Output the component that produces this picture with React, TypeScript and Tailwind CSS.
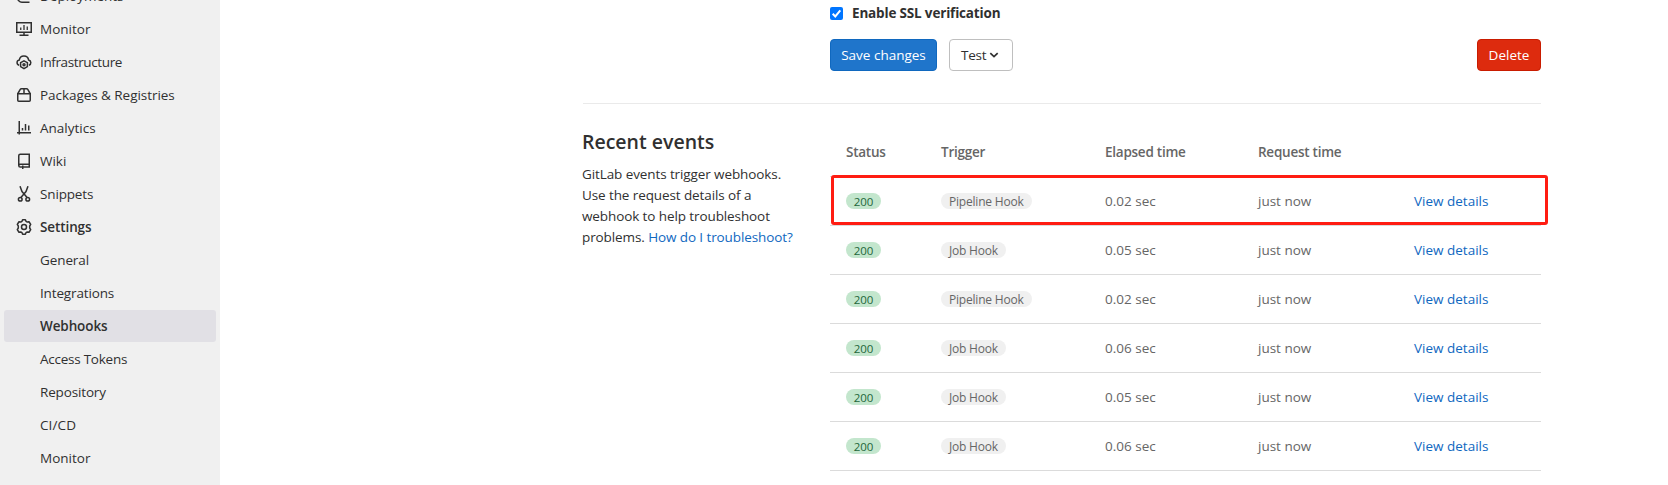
import type { ReactNode } from 'react';

function Icon({ children }: { children: ReactNode }) {
  return (
    <svg
      width="16"
      height="16"
      viewBox="0 0 16 16"
      fill="none"
      stroke="#303030"
      strokeWidth="1.5"
      className="shrink-0"
    >
      {children}
    </svg>
  );
}

const icons = {
  deployments: (
    <Icon>
      <path d="M1.750 5v4.500a4.200 4.200 0 0 0 4.200 4.750H13.500" />
    </Icon>
  ),
  monitor: (
    <Icon>
      <path d="M.75 1.750h14.500v9.500H.75zM8 11.500v3M3.500 14.250h9" />
      <path d="M4.750 9V6.500M8 9V4M11.250 9V5.500" strokeWidth="1.300" />
    </Icon>
  ),
  infrastructure: (
    <Icon>
      <path d="M3.200 11.300A2.700 2.700 0 0 1 3.300 6a4.700 4.700 0 0 1 9.300-.1 2.800 2.800 0 0 1 .3 5.400" />
      <path d="M8 6.800l3.400 1.900v3.900L8 14.650l-3.400-2.050V8.700z" />
      <circle cx="8" cy="10.700" r="1" />
    </Icon>
  ),
  packages: (
    <Icon>
      <path d="M1.750 6.750h12.500v6.500a1 1 0 0 1-1 1H2.750a1 1 0 0 1-1-1zM1.750 6.750l2.500-4.300a1.400 1.400 0 0 1 1.200-.7h5.100a1.400 1.400 0 0 1 1.200.7l2.500 4.300M8 1.750v5" />
    </Icon>
  ),
  analytics: (
    <Icon>
      <path d="M3.250 1v13.500M1 12.750h14M6.500 10.500V8M9.500 10.500V4M12.750 10.500V5.500" />
    </Icon>
  ),
  wiki: (
    <Icon>
      <path d="M13.250 11.500V1.250H4.250a1.500 1.500 0 0 0-1.500 1.500v9.750c0 .9.600 1.600 1.500 1.600h9v-2.850H4.500c-1 0-1.700.5-1.700 1.300M6.750 12.500V16" />
    </Icon>
  ),
  snippets: (
    <Icon>
      <path d="M4 .2l2 5.300 5.300 6.200M12 .2l-2 5.300L4.700 11.700" />
      <circle cx="4.250" cy="13.250" r="1.850" />
      <circle cx="11.750" cy="13.250" r="1.850" />
    </Icon>
  ),
  settings: (
    <Icon>
      <path
        strokeLinejoin="round"
        d="M6.600.75h2.800l.6 1.550 1.300.75 1.700-.3 1.700 2.700L13.700 7v2l1 1.550-1.700 2.700-1.700-.3-1.300.75-.6 1.550H6.600L6 13.700l-1.300-.75-1.700.3-1.700-2.700 1-1.550V7l-1-1.550L3 2.750l1.700.3L6 2.300z"
      />
      <circle cx="8" cy="8" r="2.500" />
    </Icon>
  ),
};

const nav: { icon: ReactNode; label: string; cls: string }[] = [
  { icon: icons.deployments, label: 'Deployments', cls: '' },
  { icon: icons.monitor, label: 'Monitor', cls: '' },
  { icon: icons.infrastructure, label: 'Infrastructure', cls: 'tracking-[-0.38px]' },
  { icon: icons.packages, label: 'Packages & Registries', cls: 'tracking-[-0.05px]' },
  { icon: icons.analytics, label: 'Analytics', cls: '' },
  { icon: icons.wiki, label: 'Wiki', cls: '' },
  { icon: icons.snippets, label: 'Snippets', cls: 'tracking-[-0.15px]' },
  { icon: icons.settings, label: 'Settings', cls: 'font-semibold tracking-[-0.1px]' },
];

const subnav = [
  { label: 'General', cls: 'tracking-[-0.1px]' },
  { label: 'Integrations', cls: 'tracking-[-0.15px]' },
  { label: 'Webhooks', cls: 'bg-[#e1e0e5] font-semibold tracking-[-0.1px]' },
  { label: 'Access Tokens', cls: 'tracking-[-0.25px]' },
  { label: 'Repository', cls: 'tracking-[-0.15px]' },
  { label: 'CI/CD', cls: 'tracking-[0.1px]' },
  { label: 'Monitor', cls: '' },
];

const events = [
  { trigger: 'Pipeline Hook', elapsed: '0.02 sec' },
  { trigger: 'Job Hook', elapsed: '0.05 sec' },
  { trigger: 'Pipeline Hook', elapsed: '0.02 sec' },
  { trigger: 'Job Hook', elapsed: '0.06 sec' },
  { trigger: 'Job Hook', elapsed: '0.05 sec' },
  { trigger: 'Job Hook', elapsed: '0.06 sec' },
];

function Sidebar() {
  return (
    <aside className="flex h-full w-[220px] shrink-0 flex-col justify-start overflow-hidden bg-[#f0f0f0] px-1">
      <nav className="-mt-5 flex flex-col gap-px">
        {nav.map((n) => (
          <a key={n.label} className={`flex h-8 shrink-0 items-center gap-2 pl-3 ${n.cls}`}>
            {n.icon}
            <span>{n.label}</span>
          </a>
        ))}
        {subnav.map((s) => (
          <a key={s.label} className={`flex h-8 shrink-0 items-center rounded-[3px] pl-9 ${s.cls}`}>
            {s.label}
          </a>
        ))}
      </nav>
    </aside>
  );
}

const columns = 'grid grid-cols-[95px_164px_153px_156px_1fr] items-center pl-4';

export default function App() {
  return (
    <div className="flex h-[485px] w-[1668px] overflow-hidden bg-white font-['Open_Sans',sans-serif] text-[13.5px] leading-[21px] text-[#303030]">
      <Sidebar />
      <main className="ml-[363px] w-[958px] shrink-0">
        <div className="flex h-[103px] flex-col pl-[247px]">
          <div className="mt-[3px] flex h-[21px] items-center gap-[9px] font-bold tracking-[-0.17px]">
            <svg width="13" height="13" viewBox="0 0 13 13" className="shrink-0">
              <rect width="13" height="13" rx="2" fill="#0075ff" />
              <path d="M2.700 6.700l2.600 2.700 5-6" fill="none" stroke="#fff" strokeWidth="2" />
            </svg>
            <span>Enable SSL verification</span>
          </div>
          <div className="mt-[15px] flex h-8 items-stretch">
            <button className="w-[107px] rounded-[4px] border border-[#1068bf] bg-[#1f75cb] text-white">
              Save changes
            </button>
            <button className="ml-3 flex w-16 items-center rounded-[4px] border border-[#bfbfbf] pl-[11px] tracking-[-0.2px]">
              Test
              <svg width="10" height="8" viewBox="0 0 10 8" className="ml-[3px]">
                <path d="M1.300 2.200L5 5.700 8.700 2.200" fill="none" stroke="#303030" strokeWidth="1.700" />
              </svg>
            </button>
            <button className="ml-auto w-16 rounded-[4px] border border-[#c91c00] bg-[#dd2b0e] text-white">
              Delete
            </button>
          </div>
        </div>
        <div className="flex border-t border-[#eaeaea]">
          <section className="w-[247px] shrink-0 pt-[26px]">
            <h4 className="-ml-px text-[19.5px] leading-6 font-semibold">Recent events</h4>
            <p className="mt-[10px] -ml-px whitespace-nowrap tracking-[-0.1px]">
              GitLab events trigger webhooks.
              <br />
              Use the request details of a
              <br />
              webhook to help troubleshoot
              <br />
              problems. <a className="text-[#1068bf]">How do I troubleshoot?</a>
            </p>
          </section>
          <section className="relative w-[711px] text-[#666]">
            <div
              className={`${columns} h-[73px] border-b border-[#dbdbdb] pt-[24px] font-semibold tracking-[-0.25px]`}
            >
              <span>Status</span>
              <span>Trigger</span>
              <span>Elapsed time</span>
              <span>Request time</span>
            </div>
            {events.map((e, i) => (
              <div key={i} className={`${columns} h-[49px] border-b border-[#dbdbdb]`}>
                <span className="flex h-4 w-[35px] items-center justify-center rounded-full bg-[#c3e6cd] pt-px text-[11.5px] leading-4 text-[#24663b]">
                  200
                </span>
                <span className="flex h-4 w-fit items-center rounded-full bg-[#f0f0f0] px-2 pt-px text-[12px] leading-4 tracking-[-0.2px]">
                  {e.trigger}
                </span>
                <span>{e.elapsed}</span>
                <span>just now</span>
                <a className="text-[#1068bf]">View details</a>
              </div>
            ))}
            <div className="absolute top-[71px] left-px h-[50px] w-[717px] rounded-[3px] border-3 border-[#ff1c12]" />
          </section>
        </div>
      </main>
    </div>
  );
}
